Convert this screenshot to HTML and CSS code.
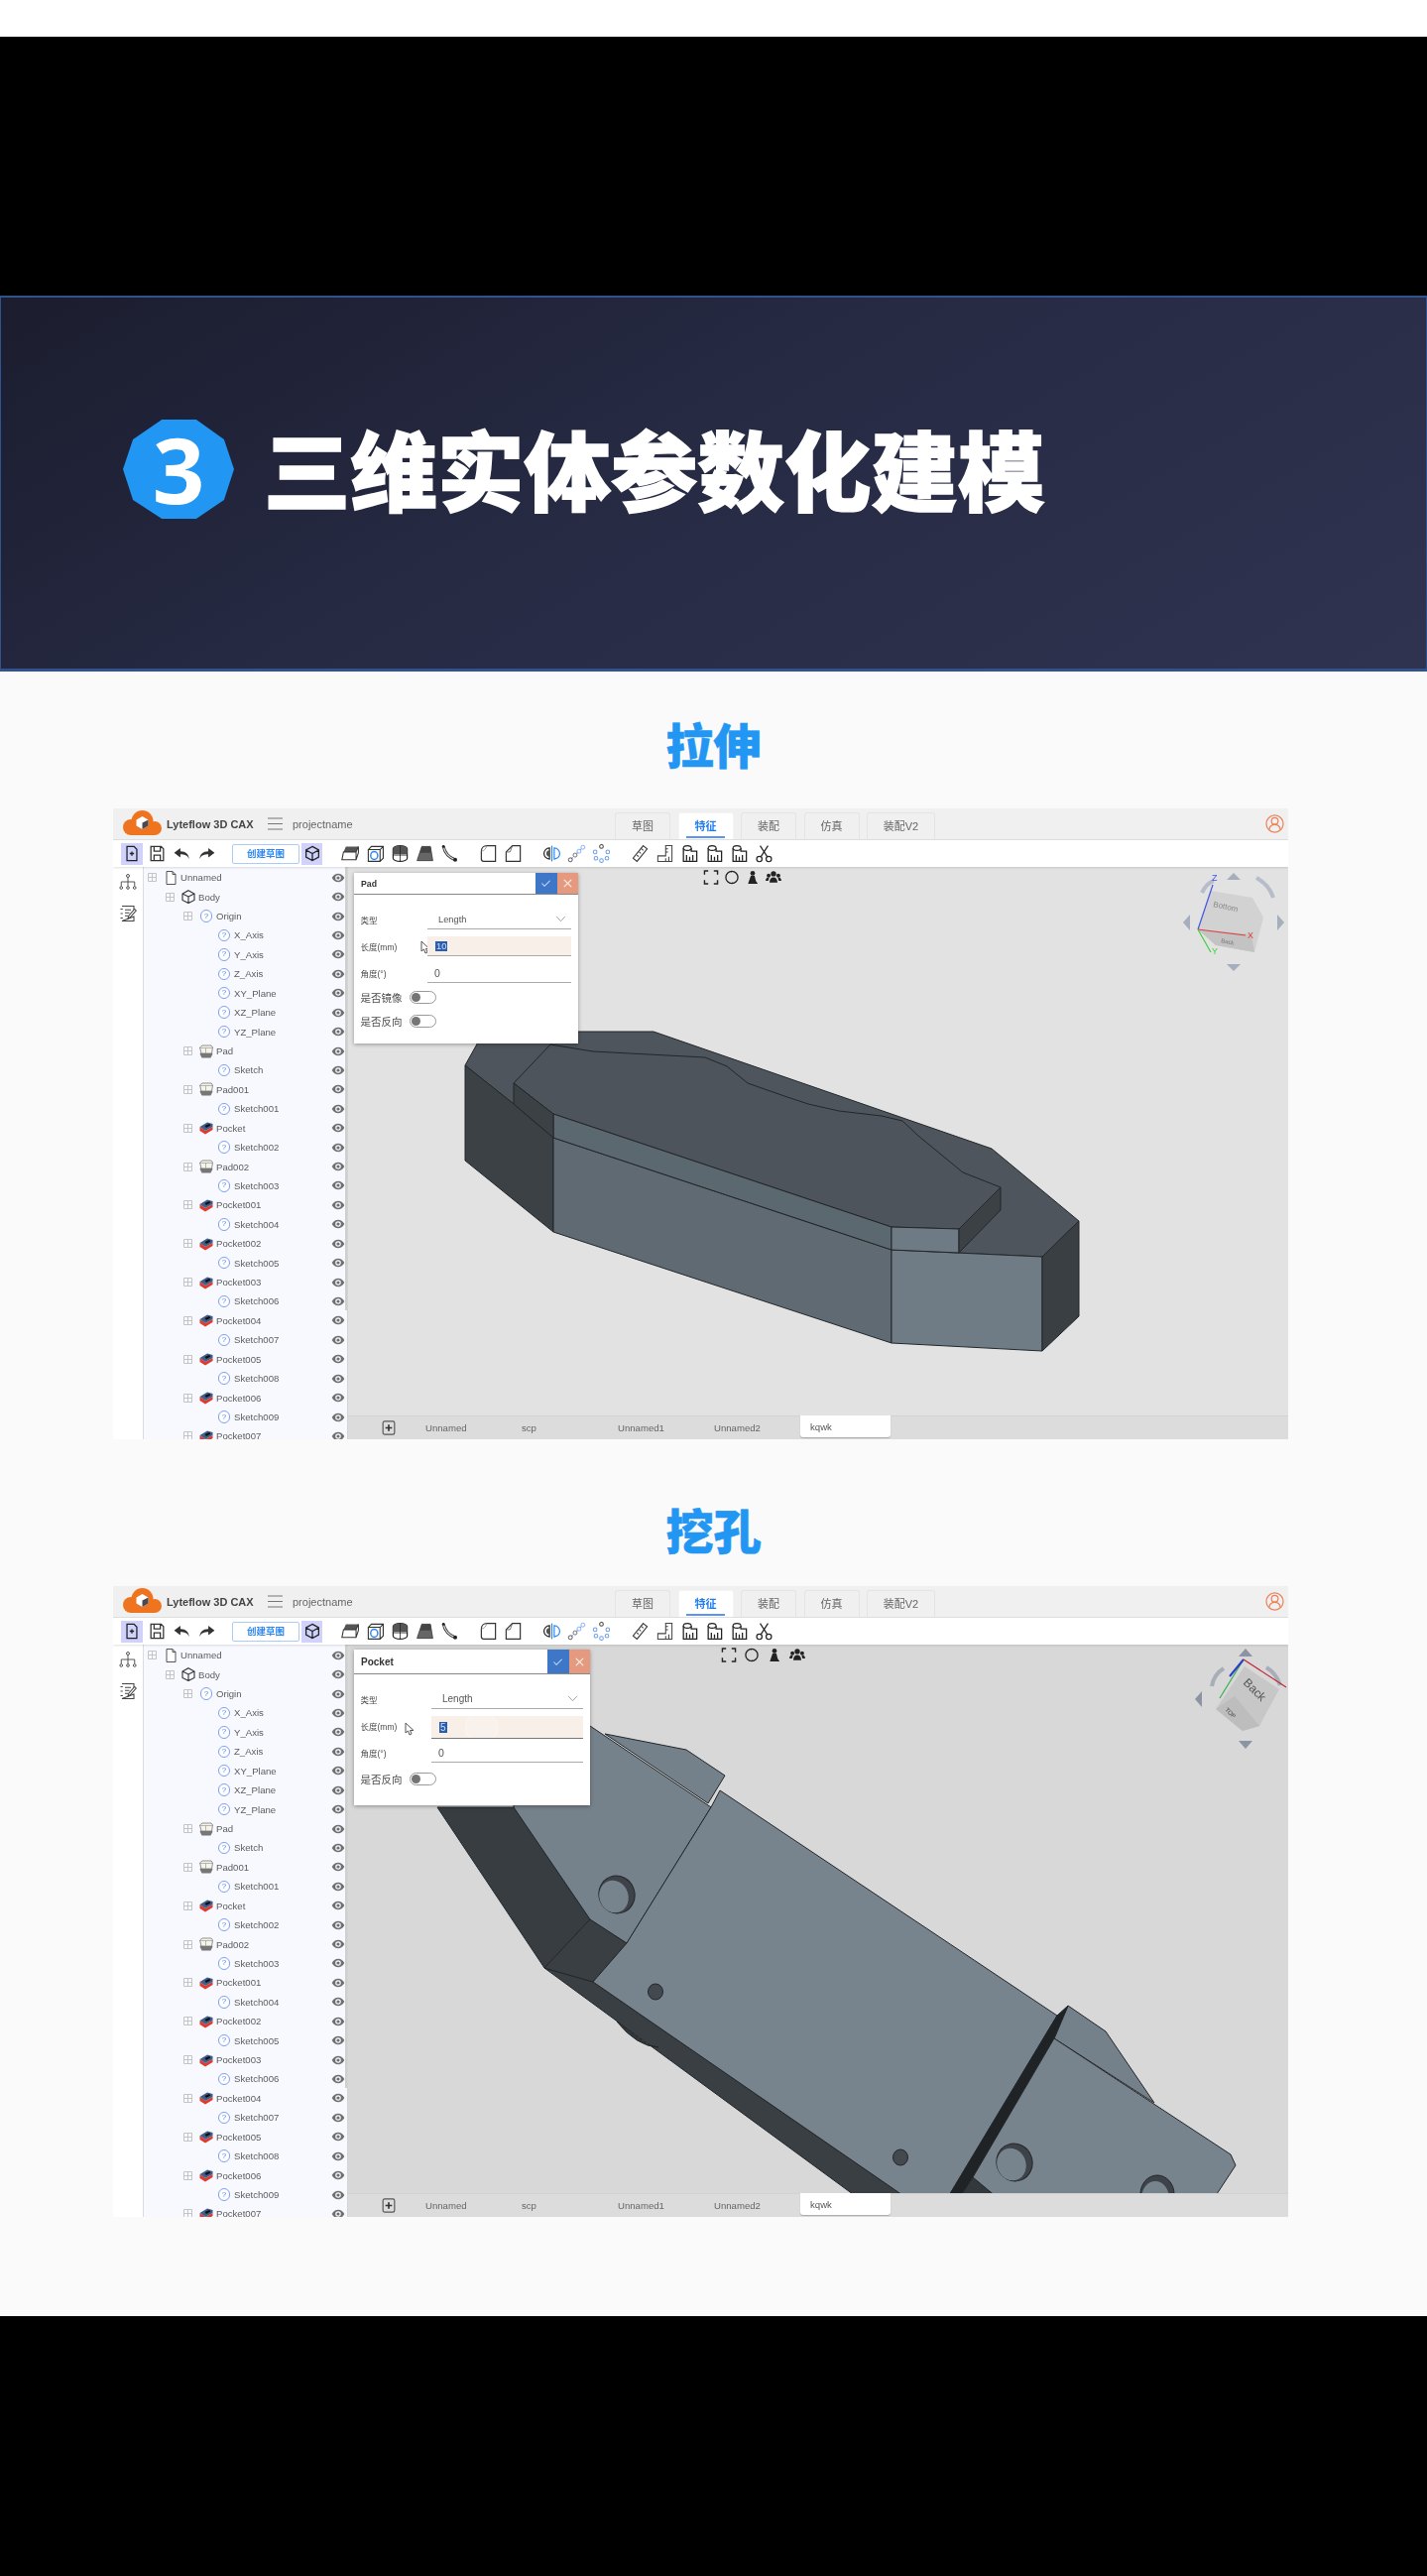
FILE: index.html
```html
<!DOCTYPE html>
<html lang="zh-CN">
<head>
<meta charset="utf-8">
<title>三维实体参数化建模</title>
<link rel="stylesheet" href="styles.css">
</head>
<body>
<svg class="defs" aria-hidden="true">
  <symbol id="logo" viewBox="0 0 40 25"><g fill="#ee7420"><circle cx="8" cy="17" r="8"/><circle cx="19.500" cy="11" r="11"/><circle cx="32" cy="18" r="7"/><rect x="8" y="14" width="24" height="11"/></g><path d="M19.500 6l6 3.500v6l-6 3.500-6-3.500v-6z" fill="#fff"/><path d="M19.500 12.500l6-3v6l-6 3.500z" fill="#454a55"/></symbol>
  <symbol id="menu" viewBox="0 0 15 13"><path d="M0 1h15M0 6.500h15M0 12h15" stroke="#777" stroke-width="1.200"/></symbol>
  <symbol id="user" viewBox="0 0 20 20"><circle cx="10" cy="10" r="9" fill="none" stroke="#ec835a" stroke-width="1.300"/><circle cx="10" cy="7" r="3.500" fill="none" stroke="#ec835a" stroke-width="1.300"/><path d="M4 16.500c.5-4 3-5.500 6-5.500s5.500 1.500 6 5.500" fill="none" stroke="#ec835a" stroke-width="1.300"/></symbol>
  <symbol id="new" viewBox="0 0 24 24"><path d="M5 2h10l4 4v16H5zM9 12h6M12 9v6" fill="none" stroke="#222" stroke-width="1.800"/></symbol>
  <symbol id="save" viewBox="0 0 24 24"><path d="M4 3h13l3 3v15H4zM8 3v6h8V3M8 21v-7h8v7" fill="none" stroke="#333" stroke-width="1.600"/></symbol>
  <symbol id="undo" viewBox="0 0 24 24"><path d="M10 5L2 11l8 6v-4c5 0 9 1 11 6 0-6-4-10-11-10z" fill="#333"/></symbol>
  <symbol id="redo" viewBox="0 0 24 24"><path d="M14 5l8 6-8 6v-4c-5 0-9 1-11 6 0-6 4-10 11-10z" fill="#333"/></symbol>
  <symbol id="cube" viewBox="0 0 24 24"><path d="M12 2l9 5v10l-9 5-9-5V7zM3 7l9 5 9-5M12 12v10" fill="none" stroke="#222" stroke-width="1.800"/></symbol>
  <symbol id="t1" viewBox="0 0 24 24"><path d="M6 3h16l-3 7H3z" fill="#555"/><path d="M3 10h16v10H1z M19 10l3-7v8l-3 9" fill="#fff" stroke="#333" stroke-width="1.300"/></symbol>
  <symbol id="t2" viewBox="0 0 24 24"><path d="M3 7h15v15H3zM3 7l4-4h15v15l-4 4M18 7l4-4" fill="#fff" stroke="#333" stroke-width="1.400"/><ellipse cx="10.500" cy="14.500" rx="4.500" ry="5" fill="none" stroke="#2e86f0" stroke-width="1.800"/></symbol>
  <symbol id="t3" viewBox="0 0 24 24"><path d="M3 6a9 4 0 0 1 18 0v12a9 4 0 0 1-18 0z" fill="#fff" stroke="#222" stroke-width="1.500"/><path d="M3 6a9 4 0 0 1 18 0v7H3z" fill="#555"/><path d="M12 2v20M3 14h18" stroke="#222"/></symbol>
  <symbol id="t4" viewBox="0 0 24 24"><path d="M8 3h11l3 18H2z" fill="#666" stroke="#333"/><path d="M8 3h11l1 8H6z" fill="#444"/></symbol>
  <symbol id="t5" viewBox="0 0 24 24"><path d="M4 3c2 9 7 14 15 17" fill="none" stroke="#333" stroke-width="3.500"/><path d="M4 3c2 9 7 14 15 17" fill="none" stroke="#ddd" stroke-width="1.500"/><circle cx="4" cy="3" r="1.800" fill="#222"/><circle cx="19" cy="20" r="2.500" fill="#222"/></symbol>
  <symbol id="t6" viewBox="0 0 24 24"><path d="M3 9c0-4 3-7 7-7h11v20H6a3 3 0 0 1-3-3z" fill="#fff" stroke="#333" stroke-width="1.500"/><path d="M3 9c3 0 6-3 7-7" fill="none" stroke="#888"/></symbol>
  <symbol id="t7" viewBox="0 0 24 24"><path d="M3 10l8-8h10v20H3z" fill="#fff" stroke="#333" stroke-width="1.500"/><path d="M3 10h5l3-8" fill="none" stroke="#555"/></symbol>
  <symbol id="t8" viewBox="0 0 24 24"><path d="M9 5a7 7 0 0 0 0 14z" fill="#fff" stroke="#222" stroke-width="1.500"/><path d="M9 8a4 4 0 0 0 0 8z" fill="#555"/><path d="M12 2v20" stroke="#2e86f0" stroke-width="1.500"/><path d="M15 5a7 7 0 0 1 0 14z" fill="none" stroke="#2e86f0" stroke-width="1.500"/></symbol>
  <symbol id="t9" viewBox="0 0 24 24"><path d="M5 19L19 5" stroke="#8fb4ee" stroke-width="2" stroke-dasharray="3 2"/><circle cx="4" cy="20" r="2.500" fill="#fff" stroke="#333"/><circle cx="10" cy="14" r="2.500" fill="#fff" stroke="#555"/><circle cx="15" cy="9" r="2.500" fill="#fff" stroke="#6d9fec"/><circle cx="20" cy="4" r="2.500" fill="#fff" stroke="#6d9fec"/></symbol>
  <symbol id="t10" viewBox="0 0 24 24"><g fill="#fff" stroke="#6d9fec" stroke-width="1.300"><circle cx="12" cy="21" r="2.300"/><circle cx="5" cy="18" r="2.300"/><circle cx="19" cy="18" r="2.300"/><circle cx="4" cy="10" r="2.300"/><circle cx="20" cy="10" r="2.300"/></g><g fill="#fff" stroke="#444" stroke-width="1.300"><circle cx="12" cy="3" r="2.300"/></g></symbol>
  <symbol id="t11" viewBox="0 0 24 24"><path d="M16 2l5 4L8 22l-5-4zM14 6l2 2M11 10l2 2M8 14l2 2" fill="#fff" stroke="#333" stroke-width="1.300"/></symbol>
  <symbol id="t12" viewBox="0 0 24 24"><path d="M13 2h8v20H3v-7h10zM17 16v6M13 18v4M13 6h3M13 10h3" fill="#fff" stroke="#444" stroke-width="1.300"/></symbol>
  <symbol id="t13" viewBox="0 0 24 24"><path d="M4 6h10v3h7v13H4z" fill="#fff" stroke="#222" stroke-width="1.600"/><ellipse cx="9" cy="5" rx="5" ry="3" fill="#fff" stroke="#222" stroke-width="1.400"/><path d="M8 21v-7M12 21v-5M16 21v-7" stroke="#222" stroke-width="1.600"/></symbol>
  <symbol id="t16" viewBox="0 0 24 24"><path d="M7 2l9 14M17 2L8 16" stroke="#222" stroke-width="1.500"/><circle cx="6" cy="19" r="3.400" fill="none" stroke="#222" stroke-width="1.500"/><circle cx="18" cy="19" r="3.400" fill="none" stroke="#222" stroke-width="1.500"/></symbol>
  <symbol id="org" viewBox="0 0 24 24"><path d="M12 6v6M3 18v-6h18v6M12 12v6" fill="none" stroke="#444" stroke-width="1.200"/><circle cx="12" cy="4" r="2" fill="none" stroke="#444" stroke-width="1.200"/><circle cx="3" cy="20" r="1.800" fill="none" stroke="#444" stroke-width="1.200"/><circle cx="12" cy="20" r="1.800" fill="none" stroke="#444" stroke-width="1.200"/><circle cx="21" cy="20" r="1.800" fill="none" stroke="#444" stroke-width="1.200"/></symbol>
  <symbol id="note" viewBox="0 0 24 24"><path d="M4 2h16v7M20 16v6H4zM8 7h8M8 11h6M8 15h4M2 6h3M2 12h3M2 18h3" fill="none" stroke="#444" stroke-width="1.400"/><path d="M12 19l1-4 8-9 2 2-8 9z" fill="#fff" stroke="#444" stroke-width="1.400"/></symbol>
  <symbol id="xp" viewBox="0 0 9 9"><path d="M.5.500h8v8h-8zM4.500.500v8M.5 4.500h8" fill="none" stroke="#c4c4c4"/></symbol>
  <symbol id="file" viewBox="0 0 14 14"><path d="M3 .5h6l3 3v10H3zM9 .5v3h3" fill="#fff" stroke="#555"/></symbol>
  <symbol id="body" viewBox="0 0 14 14"><path d="M7 .7l6 3.300v6.500l-6 3-6-3V4zM1 4l6 3 6-3M7 7v6.500" fill="none" stroke="#333" stroke-width="1.100"/></symbol>
  <symbol id="pad" viewBox="0 0 14 14"><path d="M.5 9.500l2-2h9l2 2-2 4h-9z" fill="#777"/><path d="M3 1h9l1.500 2-1 6H2L.5 3z" fill="#f6f4e8" stroke="#777" stroke-width=".8"/><path d="M.5 3.500h13M6.500 3.500V9" stroke="#999" stroke-width=".7"/></symbol>
  <symbol id="pocket" viewBox="0 0 14 14"><path d="M.5 6L6 10l7.500-4v3L6 13.500.5 10z" fill="#e03a2e"/><path d="M.5 6L8 1.500l5.500 1.500v3L6 10z" fill="#3f5f8a"/><path d="M5.500 5L10 3l1.500 1.500L7 7z" fill="#111"/></symbol>
  <symbol id="eye" viewBox="0 0 14 14"><path d="M.7 7C2.500 3.800 4.500 2.700 7 2.700S11.500 3.800 13.300 7c-1.800 3.200-3.800 4.300-6.300 4.300S2.500 10.200.7 7z" fill="#6f6f6f"/><circle cx="7" cy="7" r="2.800" fill="#f7f9ff"/><circle cx="7" cy="7" r="1.600" fill="#6f6f6f"/></symbol>
  <symbol id="v1" viewBox="0 0 16 16"><path d="M1 5V1h4M11 1h4v4M15 11v4h-4M5 15H1v-4" fill="none" stroke="#222" stroke-width="1.500"/></symbol>
  <symbol id="v2" viewBox="0 0 16 16"><circle cx="8" cy="8" r="6.500" fill="none" stroke="#222" stroke-width="1.400"/><path d="M6 1l3 0-1.500 2zM10 15l-3 0 1.500-2z" fill="#222"/></symbol>
  <symbol id="v3" viewBox="0 0 16 16"><circle cx="8" cy="3.500" r="2.500" fill="#222"/><path d="M6 6h4l1.500 6 2 3H3l1-3z" fill="#222"/></symbol>
  <symbol id="v4" viewBox="0 0 18 16"><circle cx="9" cy="4" r="3" fill="#222"/><circle cx="3.500" cy="6" r="2.200" fill="#222"/><circle cx="14.500" cy="6" r="2.200" fill="#222"/><path d="M4.500 14c0-4 2-6 4.500-6s4.500 2 4.500 6zM0 12c0-2 1.500-4 3-4l1 1-1 3zM18 12c0-2-1.500-4-3-4l-1 1 1 3z" fill="#222"/></symbol>
  <symbol id="cur" viewBox="0 0 10 14"><path d="M1 1v10l2.500-2L5 13l2-1-1.500-3.500H9z" fill="#fff" stroke="#555"/></symbol>
  <symbol id="chk" viewBox="0 0 12 12"><path d="M1.500 6l3 3 6-6" fill="none" stroke="#cfe0f7" stroke-width="1.100"/></symbol>
  <symbol id="cls" viewBox="0 0 12 12"><path d="M2 2l8 8M10 2l-8 8" fill="none" stroke="#fbeee8" stroke-width="1.300"/></symbol>
  <symbol id="chev" viewBox="0 0 12 8"><path d="M1 1l5 5.500L11 1" fill="none" stroke="#999"/></symbol>
  <symbol id="plus" viewBox="0 0 16 18"><rect x="1" y="1" width="14" height="16" rx="2" fill="none" stroke="#555" stroke-width="1.400"/><path d="M8 5v8M4 9h8" stroke="#333" stroke-width="2"/></symbol>
</svg>

<div class="topstrip"></div>
<div class="blackband"></div>
<section class="banner">
  <div class="badge">3</div>
  <h1 class="title">三维实体参数化建模</h1>
</section>

<main class="content">
  <h2 class="heading first">拉伸</h2>
  <div class="app">
    <header class="app-head">
      <svg class="logo"><use href="#logo"/></svg>
      <span class="brand">Lyteflow 3D CAX</span>
      <svg class="menu"><use href="#menu"/></svg>
      <span class="project">projectname</span>
      <nav class="tabs">
        <span class="tab w56">草图</span><span class="tab w56 active">特征</span><span class="tab w56">装配</span><span class="tab w56">仿真</span><span class="tab w69">装配V2</span>
      </nav>
      <svg class="user"><use href="#user"/></svg>
    </header>
    <div class="toolbar">
      <span class="on"><svg class="ti"><use href="#new"/></svg></span>
      <svg class="ti gap0"><use href="#save"/></svg><svg class="ti"><use href="#undo"/></svg><svg class="ti"><use href="#redo"/></svg>
      <button class="sketch-btn">创建草图</button>
      <span class="on cube-on"><svg class="ti"><use href="#cube"/></svg></span>
      <svg class="ti gap1"><use href="#t1"/></svg><svg class="ti"><use href="#t2"/></svg><svg class="ti"><use href="#t3"/></svg><svg class="ti"><use href="#t4"/></svg><svg class="ti"><use href="#t5"/></svg>
      <svg class="ti gap2"><use href="#t6"/></svg><svg class="ti"><use href="#t7"/></svg>
      <svg class="ti gap2"><use href="#t8"/></svg><svg class="ti"><use href="#t9"/></svg><svg class="ti"><use href="#t10"/></svg>
      <svg class="ti gap2"><use href="#t11"/></svg><svg class="ti"><use href="#t12"/></svg><svg class="ti"><use href="#t13"/></svg><svg class="ti"><use href="#t13"/></svg><svg class="ti"><use href="#t13"/></svg><svg class="ti"><use href="#t16"/></svg>
    </div>
    <div class="app-body">
      <aside class="rail"><svg class="rail-ic"><use href="#org"/></svg><svg class="rail-ic"><use href="#note"/></svg></aside>
      <div class="tree">
        <div class="row l0"><svg class="xp"><use href="#xp"/></svg><svg class="ic"><use href="#file"/></svg><span>Unnamed</span><svg class="eye"><use href="#eye"/></svg></div>
        <div class="row l1"><svg class="xp"><use href="#xp"/></svg><svg class="ic"><use href="#body"/></svg><span>Body</span><svg class="eye"><use href="#eye"/></svg></div>
        <div class="row l2"><svg class="xp"><use href="#xp"/></svg><b class="q">?</b><span>Origin</span><svg class="eye"><use href="#eye"/></svg></div>
        <div class="row l3"><svg class="xp"></svg><b class="q">?</b><span>X_Axis</span><svg class="eye"><use href="#eye"/></svg></div>
        <div class="row l3"><svg class="xp"></svg><b class="q">?</b><span>Y_Axis</span><svg class="eye"><use href="#eye"/></svg></div>
        <div class="row l3"><svg class="xp"></svg><b class="q">?</b><span>Z_Axis</span><svg class="eye"><use href="#eye"/></svg></div>
        <div class="row l3"><svg class="xp"></svg><b class="q">?</b><span>XY_Plane</span><svg class="eye"><use href="#eye"/></svg></div>
        <div class="row l3"><svg class="xp"></svg><b class="q">?</b><span>XZ_Plane</span><svg class="eye"><use href="#eye"/></svg></div>
        <div class="row l3"><svg class="xp"></svg><b class="q">?</b><span>YZ_Plane</span><svg class="eye"><use href="#eye"/></svg></div>
        <div class="row l2"><svg class="xp"><use href="#xp"/></svg><svg class="ic"><use href="#pad"/></svg><span>Pad</span><svg class="eye"><use href="#eye"/></svg></div>
        <div class="row l3"><svg class="xp"></svg><b class="q">?</b><span>Sketch</span><svg class="eye"><use href="#eye"/></svg></div>
        <div class="row l2"><svg class="xp"><use href="#xp"/></svg><svg class="ic"><use href="#pad"/></svg><span>Pad001</span><svg class="eye"><use href="#eye"/></svg></div>
        <div class="row l3"><svg class="xp"></svg><b class="q">?</b><span>Sketch001</span><svg class="eye"><use href="#eye"/></svg></div>
        <div class="row l2"><svg class="xp"><use href="#xp"/></svg><svg class="ic"><use href="#pocket"/></svg><span>Pocket</span><svg class="eye"><use href="#eye"/></svg></div>
        <div class="row l3"><svg class="xp"></svg><b class="q">?</b><span>Sketch002</span><svg class="eye"><use href="#eye"/></svg></div>
        <div class="row l2"><svg class="xp"><use href="#xp"/></svg><svg class="ic"><use href="#pad"/></svg><span>Pad002</span><svg class="eye"><use href="#eye"/></svg></div>
        <div class="row l3"><svg class="xp"></svg><b class="q">?</b><span>Sketch003</span><svg class="eye"><use href="#eye"/></svg></div>
        <div class="row l2"><svg class="xp"><use href="#xp"/></svg><svg class="ic"><use href="#pocket"/></svg><span>Pocket001</span><svg class="eye"><use href="#eye"/></svg></div>
        <div class="row l3"><svg class="xp"></svg><b class="q">?</b><span>Sketch004</span><svg class="eye"><use href="#eye"/></svg></div>
        <div class="row l2"><svg class="xp"><use href="#xp"/></svg><svg class="ic"><use href="#pocket"/></svg><span>Pocket002</span><svg class="eye"><use href="#eye"/></svg></div>
        <div class="row l3"><svg class="xp"></svg><b class="q">?</b><span>Sketch005</span><svg class="eye"><use href="#eye"/></svg></div>
        <div class="row l2"><svg class="xp"><use href="#xp"/></svg><svg class="ic"><use href="#pocket"/></svg><span>Pocket003</span><svg class="eye"><use href="#eye"/></svg></div>
        <div class="row l3"><svg class="xp"></svg><b class="q">?</b><span>Sketch006</span><svg class="eye"><use href="#eye"/></svg></div>
        <div class="row l2"><svg class="xp"><use href="#xp"/></svg><svg class="ic"><use href="#pocket"/></svg><span>Pocket004</span><svg class="eye"><use href="#eye"/></svg></div>
        <div class="row l3"><svg class="xp"></svg><b class="q">?</b><span>Sketch007</span><svg class="eye"><use href="#eye"/></svg></div>
        <div class="row l2"><svg class="xp"><use href="#xp"/></svg><svg class="ic"><use href="#pocket"/></svg><span>Pocket005</span><svg class="eye"><use href="#eye"/></svg></div>
        <div class="row l3"><svg class="xp"></svg><b class="q">?</b><span>Sketch008</span><svg class="eye"><use href="#eye"/></svg></div>
        <div class="row l2"><svg class="xp"><use href="#xp"/></svg><svg class="ic"><use href="#pocket"/></svg><span>Pocket006</span><svg class="eye"><use href="#eye"/></svg></div>
        <div class="row l3"><svg class="xp"></svg><b class="q">?</b><span>Sketch009</span><svg class="eye"><use href="#eye"/></svg></div>
        <div class="row l2"><svg class="xp"><use href="#xp"/></svg><svg class="ic"><use href="#pocket"/></svg><span>Pocket007</span><svg class="eye"><use href="#eye"/></svg></div>
      </div>
      <div class="view">
        <div class="canvas canvas-a">
          <svg class="model" viewBox="350 874 949 553">
            <g stroke="#23272a" stroke-width="1" stroke-linejoin="round">
              <path d="M469 1074L488 1040H659L1000 1158L1088 1231L1051 1267L899 1260L558 1147L518 1113z" fill="#4e555c"/>
              <path d="M469 1074L518 1113L558 1147V1242L469 1170z" fill="#3c4146"/>
              <path d="M558 1147L899 1260V1354L558 1242z" fill="#5f6a72"/>
              <path d="M899 1260L1051 1267V1362L899 1354z" fill="#6f7c86"/>
              <path d="M1051 1267L1088 1231V1327L1051 1362z" fill="#3a3f44"/>
              <path d="M518 1092L555 1053L598 1060L711 1066L733 1075L754 1092L791 1105L815 1113L846 1120L889 1125L910 1130L926 1145L971 1182L1009 1197L967 1239L899 1237L558 1123z" fill="#4d545b"/>
              <path d="M558 1123L899 1237V1260L558 1147z" fill="#5c6870"/>
              <path d="M899 1237L967 1239V1263L899 1260z" fill="#6e7b85"/>
              <path d="M967 1239L1009 1197V1220L967 1263z" fill="#3c4146"/>
              <path d="M518 1092L558 1123V1147L518 1113z" fill="#3c4146"/>
            </g>
            <g class="gizmo">
              <path d="M1221 898L1263 905L1274 925L1265 960L1226 953L1208 937z" fill="#d2d2d2"/>
              <path d="M1208 937L1262 942L1265 960L1226 953z" fill="#c3c3c3"/>
              <path d="M1244 880l7 7h-14zM1244 979l7-7h-14zM1193 930l7-8v16zM1295 930l-7-8v16z" fill="#a5aebc"/>
              <path d="M1212 900q5-10 12-12M1267 885q13 7 17 20" fill="none" stroke="#b6bdc8" stroke-width="4"/>
              <text class="gz-text" transform="translate(1223 914) rotate(12)">Bottom</text>
              <text class="gz-small" transform="translate(1231 950) rotate(12)">Back</text>
              <path d="M1208 937L1223 892" stroke="#3f55e6" stroke-width="1.200"/>
              <path d="M1208 937L1256 943" stroke="#e23b3b" stroke-width="1.200"/>
              <path d="M1208 937L1221 960" stroke="#40d040" stroke-width="1.200"/>
              <text class="gz-z" x="1222" y="888">Z</text><text class="gz-x" x="1258" y="946">X</text><text class="gz-y" x="1222" y="962">Y</text>
            </g>
          </svg>
          <div class="tools tools-a"><svg class="tool"><use href="#v1"/></svg><svg class="tool"><use href="#v2"/></svg><svg class="tool"><use href="#v3"/></svg><svg class="tool"><use href="#v4"/></svg></div>
          <div class="dlg dlg-a">
            <div class="dlg-head"><b>Pad</b><span class="ok"><svg><use href="#chk"/></svg></span><span class="no"><svg><use href="#cls"/></svg></span></div>
            <div class="f first-f"><label>类型</label><div class="val line">Length<svg class="chev"><use href="#chev"/></svg></div></div>
            <div class="f"><label class="lat">长度(mm)</label><svg class="cur"><use href="#cur"/></svg><div class="val line hot"><i>10</i></div></div>
            <div class="f"><label class="lat">角度(°)</label><div class="val line num">0</div></div>
            <div class="sw"><label>是否镜像</label><span class="toggle"></span></div>
            <div class="sw"><label>是否反向</label><span class="toggle"></span></div>
          </div>
        </div>
        <div class="doc-bar">
          <svg class="doc-add"><use href="#plus"/></svg>
          <span class="doc">Unnamed</span><span class="doc">scp</span><span class="doc">Unnamed1</span><span class="doc">Unnamed2</span><span class="doc active">kqwk</span>
        </div>
      </div>
    </div>
  </div>

  <h2 class="heading second">挖孔</h2>
  <div class="app">
    <header class="app-head">
      <svg class="logo"><use href="#logo"/></svg>
      <span class="brand">Lyteflow 3D CAX</span>
      <svg class="menu"><use href="#menu"/></svg>
      <span class="project">projectname</span>
      <nav class="tabs">
        <span class="tab w56">草图</span><span class="tab w56 active">特征</span><span class="tab w56">装配</span><span class="tab w56">仿真</span><span class="tab w69">装配V2</span>
      </nav>
      <svg class="user"><use href="#user"/></svg>
    </header>
    <div class="toolbar">
      <span class="on"><svg class="ti"><use href="#new"/></svg></span>
      <svg class="ti gap0"><use href="#save"/></svg><svg class="ti"><use href="#undo"/></svg><svg class="ti"><use href="#redo"/></svg>
      <button class="sketch-btn">创建草图</button>
      <span class="on cube-on"><svg class="ti"><use href="#cube"/></svg></span>
      <svg class="ti gap1"><use href="#t1"/></svg><svg class="ti"><use href="#t2"/></svg><svg class="ti"><use href="#t3"/></svg><svg class="ti"><use href="#t4"/></svg><svg class="ti"><use href="#t5"/></svg>
      <svg class="ti gap2"><use href="#t6"/></svg><svg class="ti"><use href="#t7"/></svg>
      <svg class="ti gap2"><use href="#t8"/></svg><svg class="ti"><use href="#t9"/></svg><svg class="ti"><use href="#t10"/></svg>
      <svg class="ti gap2"><use href="#t11"/></svg><svg class="ti"><use href="#t12"/></svg><svg class="ti"><use href="#t13"/></svg><svg class="ti"><use href="#t13"/></svg><svg class="ti"><use href="#t13"/></svg><svg class="ti"><use href="#t16"/></svg>
    </div>
    <div class="app-body">
      <aside class="rail"><svg class="rail-ic"><use href="#org"/></svg><svg class="rail-ic"><use href="#note"/></svg></aside>
      <div class="tree">
        <div class="row l0"><svg class="xp"><use href="#xp"/></svg><svg class="ic"><use href="#file"/></svg><span>Unnamed</span><svg class="eye"><use href="#eye"/></svg></div>
        <div class="row l1"><svg class="xp"><use href="#xp"/></svg><svg class="ic"><use href="#body"/></svg><span>Body</span><svg class="eye"><use href="#eye"/></svg></div>
        <div class="row l2"><svg class="xp"><use href="#xp"/></svg><b class="q">?</b><span>Origin</span><svg class="eye"><use href="#eye"/></svg></div>
        <div class="row l3"><svg class="xp"></svg><b class="q">?</b><span>X_Axis</span><svg class="eye"><use href="#eye"/></svg></div>
        <div class="row l3"><svg class="xp"></svg><b class="q">?</b><span>Y_Axis</span><svg class="eye"><use href="#eye"/></svg></div>
        <div class="row l3"><svg class="xp"></svg><b class="q">?</b><span>Z_Axis</span><svg class="eye"><use href="#eye"/></svg></div>
        <div class="row l3"><svg class="xp"></svg><b class="q">?</b><span>XY_Plane</span><svg class="eye"><use href="#eye"/></svg></div>
        <div class="row l3"><svg class="xp"></svg><b class="q">?</b><span>XZ_Plane</span><svg class="eye"><use href="#eye"/></svg></div>
        <div class="row l3"><svg class="xp"></svg><b class="q">?</b><span>YZ_Plane</span><svg class="eye"><use href="#eye"/></svg></div>
        <div class="row l2"><svg class="xp"><use href="#xp"/></svg><svg class="ic"><use href="#pad"/></svg><span>Pad</span><svg class="eye"><use href="#eye"/></svg></div>
        <div class="row l3"><svg class="xp"></svg><b class="q">?</b><span>Sketch</span><svg class="eye"><use href="#eye"/></svg></div>
        <div class="row l2"><svg class="xp"><use href="#xp"/></svg><svg class="ic"><use href="#pad"/></svg><span>Pad001</span><svg class="eye"><use href="#eye"/></svg></div>
        <div class="row l3"><svg class="xp"></svg><b class="q">?</b><span>Sketch001</span><svg class="eye"><use href="#eye"/></svg></div>
        <div class="row l2"><svg class="xp"><use href="#xp"/></svg><svg class="ic"><use href="#pocket"/></svg><span>Pocket</span><svg class="eye"><use href="#eye"/></svg></div>
        <div class="row l3"><svg class="xp"></svg><b class="q">?</b><span>Sketch002</span><svg class="eye"><use href="#eye"/></svg></div>
        <div class="row l2"><svg class="xp"><use href="#xp"/></svg><svg class="ic"><use href="#pad"/></svg><span>Pad002</span><svg class="eye"><use href="#eye"/></svg></div>
        <div class="row l3"><svg class="xp"></svg><b class="q">?</b><span>Sketch003</span><svg class="eye"><use href="#eye"/></svg></div>
        <div class="row l2"><svg class="xp"><use href="#xp"/></svg><svg class="ic"><use href="#pocket"/></svg><span>Pocket001</span><svg class="eye"><use href="#eye"/></svg></div>
        <div class="row l3"><svg class="xp"></svg><b class="q">?</b><span>Sketch004</span><svg class="eye"><use href="#eye"/></svg></div>
        <div class="row l2"><svg class="xp"><use href="#xp"/></svg><svg class="ic"><use href="#pocket"/></svg><span>Pocket002</span><svg class="eye"><use href="#eye"/></svg></div>
        <div class="row l3"><svg class="xp"></svg><b class="q">?</b><span>Sketch005</span><svg class="eye"><use href="#eye"/></svg></div>
        <div class="row l2"><svg class="xp"><use href="#xp"/></svg><svg class="ic"><use href="#pocket"/></svg><span>Pocket003</span><svg class="eye"><use href="#eye"/></svg></div>
        <div class="row l3"><svg class="xp"></svg><b class="q">?</b><span>Sketch006</span><svg class="eye"><use href="#eye"/></svg></div>
        <div class="row l2"><svg class="xp"><use href="#xp"/></svg><svg class="ic"><use href="#pocket"/></svg><span>Pocket004</span><svg class="eye"><use href="#eye"/></svg></div>
        <div class="row l3"><svg class="xp"></svg><b class="q">?</b><span>Sketch007</span><svg class="eye"><use href="#eye"/></svg></div>
        <div class="row l2"><svg class="xp"><use href="#xp"/></svg><svg class="ic"><use href="#pocket"/></svg><span>Pocket005</span><svg class="eye"><use href="#eye"/></svg></div>
        <div class="row l3"><svg class="xp"></svg><b class="q">?</b><span>Sketch008</span><svg class="eye"><use href="#eye"/></svg></div>
        <div class="row l2"><svg class="xp"><use href="#xp"/></svg><svg class="ic"><use href="#pocket"/></svg><span>Pocket006</span><svg class="eye"><use href="#eye"/></svg></div>
        <div class="row l3"><svg class="xp"></svg><b class="q">?</b><span>Sketch009</span><svg class="eye"><use href="#eye"/></svg></div>
        <div class="row l2"><svg class="xp"><use href="#xp"/></svg><svg class="ic"><use href="#pocket"/></svg><span>Pocket007</span><svg class="eye"><use href="#eye"/></svg></div>
      </div>
      <div class="view">
        <div class="canvas canvas-b">
          <svg class="model" viewBox="350 1658 949 553">
            <g stroke="#23272a" stroke-width="1" stroke-linejoin="round">
              <path d="M441 1822L518 1822L595 1935L549 1984z" fill="#383d42"/>
              <path d="M549 1984L598 1998L913 2215H864z" fill="#3a3f44"/>
              <path d="M622 2038q20 25 42 26l-10 -2z" fill="#33383c"/>
              <path d="M595 1935L632 1959L598 1998L549 1984z" fill="#3a3f44"/>
              <path d="M610 1748L692 1764L731 1790L714 1818z" fill="#74808a"/>
              <path d="M520 1700L595 1740L717 1822L632 1959L595 1935L518 1822z" fill="#76828b"/>
              <path d="M726 1805L1066 2032L956 2215H913L598 1998L632 1959L717 1822z" fill="#78848d"/>
              <path d="M1077 2022L1115 2048L1164 2120L1063 2055z" fill="#74808a"/>
              <path d="M1066 2032L1077 2022L1063 2055L981 2195L968 2215H956z" fill="#1f2326"/>
              <path d="M981 2195L1005 2215H968z" fill="#33383c"/>
              <path d="M1063 2055L1241 2172L1246 2183L1225 2215H1005L981 2195z" fill="#78848d"/>
              <ellipse cx="622" cy="1910" rx="18" ry="19" fill="#3d4349" transform="rotate(-20 622 1910)"/>
              <ellipse cx="1023" cy="2180" rx="18" ry="19" fill="#3d4349" transform="rotate(-20 1023 2180)"/>
              <ellipse cx="1167" cy="2212" rx="17" ry="19" fill="#3d4349"/>
              <ellipse cx="661" cy="2008" rx="7.500" ry="8" fill="#43494f"/>
              <ellipse cx="908" cy="2175" rx="7.500" ry="8" fill="#43494f"/>
            </g>
            <ellipse cx="619" cy="1912" rx="14.500" ry="16.500" fill="#78848d" transform="rotate(-20 619 1912)"/>
            <ellipse cx="1020" cy="2182" rx="14.500" ry="16.500" fill="#78848d" transform="rotate(-20 1020 2182)"/>
            <ellipse cx="1165" cy="2216" rx="14" ry="17" fill="#78848d"/>
            <g class="gizmo">
              <path d="M1255 1680L1290 1703L1270 1740L1253 1745L1226 1723z" fill="#c7c7c7"/>
              <path d="M1226 1723L1245 1710L1270 1740L1253 1745z" fill="#bdbdbd"/>
              <path d="M1256 1662l7 8h-14zM1256 1763l7-8h-14zM1205 1713l7-8v16z" fill="#8c93a3"/>
              <path d="M1222 1700q2-12 12-18M1277 1681q10 6 14 18" fill="none" stroke="#a8aeb8" stroke-width="4"/>
              <text class="gz-text dark" transform="translate(1253 1697) rotate(45)">Back</text>
              <text class="gz-small dark" transform="translate(1235 1724) rotate(45)">TOP</text>
              <path d="M1254 1673L1297 1701" stroke="#c2272d" stroke-width="1.200"/>
              <path d="M1254 1673L1230 1712" stroke="#33b04a" stroke-width="1.200"/>
              <path d="M1254 1673L1240 1690" stroke="#2c3ec4" stroke-width="2"/>
            </g>
          </svg>
          <div class="tools tools-b"><svg class="tool"><use href="#v1"/></svg><svg class="tool"><use href="#v2"/></svg><svg class="tool"><use href="#v3"/></svg><svg class="tool"><use href="#v4"/></svg></div>
          <div class="dlg dlg-b">
            <div class="dlg-head"><b>Pocket</b><span class="ok"><svg><use href="#chk"/></svg></span><span class="no"><svg><use href="#cls"/></svg></span></div>
            <div class="f first-f"><label>类型</label><div class="val line">Length<svg class="chev"><use href="#chev"/></svg></div></div>
            <div class="f"><label class="lat">长度(mm)</label><svg class="cur"><use href="#cur"/></svg><div class="val line hot"><i>5</i><span class="ring"></span></div></div>
            <div class="f"><label class="lat">角度(°)</label><div class="val line num">0</div></div>
            <div class="sw"><label>是否反向</label><span class="toggle"></span></div>
          </div>
        </div>
        <div class="doc-bar">
          <svg class="doc-add"><use href="#plus"/></svg>
          <span class="doc">Unnamed</span><span class="doc">scp</span><span class="doc">Unnamed1</span><span class="doc">Unnamed2</span><span class="doc active">kqwk</span>
        </div>
      </div>
    </div>
  </div>
</main>
<div class="blackfoot"></div>
</body>
</html>
```

FILE: styles.css
```css
* { box-sizing: border-box; }
html, body { margin: 0; padding: 0; }
body { width: 1439px; height: 2597px; overflow: hidden; background: #fafafa; font-family: "Liberation Sans", "Noto Sans CJK SC", sans-serif; }
.defs { position: absolute; width: 0; height: 0; overflow: hidden; }
svg { display: block; }

.topstrip { height: 37px; background: #fff; }
.blackband { height: 261px; background: #000; }
.blackfoot { height: 262px; background: #000; }

.banner { height: 379px; display: flex; align-items: center; gap: 30px; padding: 0 0 28px 123px; background: linear-gradient(150deg, #1b1d2e 0%, #262a43 45%, #2f3350 100%); border: solid #32518f; border-width: 2px 1px 3px 1px; }
.badge { width: 112px; height: 100px; display: flex; align-items: center; justify-content: center; background: #2196f3; color: #fff; font: 700 92px/1 "Noto Sans", sans-serif; clip-path: polygon(35% 0, 66% 0, 91% 20%, 100% 50%, 91% 81%, 66% 100%, 35% 100%, 9% 81%, 0 50%, 9% 20%); }
.title { margin: -5px 0 0; color: #fff; font: 900 87.500px/100px "Noto Sans CJK SC", sans-serif; -webkit-text-stroke: 1.500px #fff; white-space: nowrap; }

.content { height: 1658px; overflow: hidden; }
.heading { margin: 0; height: 60px; text-align: center; color: #2196f3; font: 900 48px/60px "Noto Sans CJK SC", sans-serif; -webkit-text-stroke: .6px #2196f3; }
.heading.first { margin-top: 42px; margin-bottom: 36px; }
.heading.second { margin-top: 60px; margin-bottom: 28px; }

.app { width: 1185px; height: 636px; margin-left: 114px; display: flex; flex-direction: column; overflow: hidden; filter: blur(.5px); color: #555; }

.app-head { height: 32px; flex: none; display: flex; align-items: flex-end; background: #f0f0f0; border-bottom: 1px solid #e0e0e0; position: relative; }
.logo { width: 40px; height: 25px; margin: 0 0 4px 10px; }
.brand { width: 102px; margin: 0 0 8px 4px; font-size: 11px; font-weight: 700; line-height: 14px; color: #444; white-space: nowrap; }
.menu { width: 15px; height: 13px; margin: 0 0 9px 0; }
.project { width: 325px; margin: 0 0 8px 10px; font-size: 11px; line-height: 14px; color: #666; }
.tabs { display: flex; gap: 7.500px; align-items: flex-end; }
.tab { height: 27px; padding-bottom: 2px; display: flex; align-items: center; justify-content: center; font-size: 11px; color: #666; border: 1px solid #e4e4e4; border-bottom: 0; border-radius: 3px 3px 0 0; background: #f0f0f0; }
.w56 { width: 56px; }
.w69 { width: 69px; }
.tab.active { background: #fff; color: #1f7bf2; font-weight: 700; border-color: #f4f4f4; position: relative; }
.tab.active::after { content: ""; position: absolute; left: 7px; right: 8px; bottom: 1px; height: 2px; background: #5c93f5; }
.user { width: 19px; height: 19px; margin: 0 4px 6px auto; }

.toolbar { height: 27px; flex: none; display: flex; align-items: center; padding-left: 6.5px; background: #fff; box-shadow: 0 1px 2px rgba(0,0,0,.12); position: relative; z-index: 2; }
.ti { width: 25px; height: 19px; flex: none; }
.on { width: 22px; height: 22px; margin: 0 1.500px; display: flex; align-items: center; justify-content: center; background: #d0d2fb; }
.on .ti { width: 18px; height: 17px; }
.cube-on { margin: 0 0 0 2px; width: 21px; }
.gap1 { margin-left: 15.500px; }
.gap2 { margin-left: 14px; }
.sketch-btn { width: 68px; height: 20px; margin: 0 0 0 13.500px; padding: 0; flex: none; border: 1px solid #a8ccf7; border-radius: 2px; background: #fff; color: #2e86f0; font: 700 9.500px/1 "Noto Sans CJK SC", sans-serif; }

.app-body { flex: 1; min-height: 0; display: flex; }
.rail { width: 30px; flex: none; display: flex; flex-direction: column; align-items: center; gap: 14px; padding-top: 6px; background: #fff; }
.rail-ic { width: 18px; height: 18px; }
.tree { width: 206px; flex: none; overflow: hidden; position: relative; padding-top: 1px; background: #f7f9ff; border-left: 1px solid #dcdcdc; }
.tree::after { content: ""; position: absolute; top: 0; right: 0; width: 2px; height: 447px; background: #cfcfcf; }
.row { height: 19.430px; display: flex; align-items: center; padding-right: 2px; font-size: 9.600px; color: #5c5c5c; white-space: nowrap; }
.row span { margin-left: 3px; }
.l0 { padding-left: 4px; }
.l1 { padding-left: 22px; }
.l2 { padding-left: 40px; }
.l3 { padding-left: 58px; }
.xp { width: 9px; height: 9px; flex: none; }
.ic { width: 14px; height: 14px; margin-left: 7px; flex: none; }
.q { width: 12.500px; height: 12.500px; margin: 0 .75px 0 7.750px; flex: none; display: flex; align-items: center; justify-content: center; border: 1px solid #7f9ff5; border-radius: 50%; background: #fff; color: #5d80e8; font-size: 8px; font-weight: 400; line-height: 1; }
.eye { width: 14px; height: 14px; margin-left: auto; flex: none; }

.view { flex: 1; min-width: 0; display: flex; flex-direction: column; border-left: 1px solid #d4d4d4; }
.canvas { flex: 1; min-height: 0; position: relative; overflow: hidden; }
.canvas-a { background: #e2e2e2; }
.canvas-b { background: #d8d8d8; }
.model { width: 949px; height: 553px; margin-left: -1px; }
.gz-text { font: 8px "Liberation Sans", sans-serif; fill: #888; }
.gz-small { font: 6px "Liberation Sans", sans-serif; fill: #777; }
.gz-text.dark { font-size: 12px; fill: #555; }
.gz-small.dark { font-size: 6px; fill: #444; }
.gz-z { font: 9px "Liberation Sans", sans-serif; fill: #3f55e6; }
.gz-x { font: 9px "Liberation Sans", sans-serif; fill: #e23b3b; }
.gz-y { font: 9px "Liberation Sans", sans-serif; fill: #40d040; }

.tools { position: absolute; top: 2px; display: flex; align-items: center; height: 16px; }
.tools-a { left: 358px; gap: 5px; }
.tools-b { left: 376px; gap: 7px; }
.tool { width: 16px; height: 15px; }

.dlg { position: absolute; left: 6px; background: #fff; box-shadow: 0 1px 4px rgba(0,0,0,.35); color: #555; }
.dlg-a { top: 6px; width: 226px; height: 172px; }
.dlg-b { top: 5px; width: 238px; height: 157px; }
.dlg-head { display: flex; align-items: stretch; border-bottom: 1px solid #888; color: #333; }
.dlg-a .dlg-head { height: 22px; font-size: 8.700px; }
.dlg-b .dlg-head { height: 25px; font-size: 10px; }
.dlg-head b { flex: 1; padding-left: 7px; align-self: center; }
.ok, .no { width: 21.500px; display: flex; align-items: center; justify-content: center; }
.ok svg, .no svg { width: 11px; height: 11px; }
.ok { background: #3f77c8; }
.no { background: #e59a80; }

.f { display: flex; align-items: stretch; height: 20px; margin: 7px 7px 0 6.500px; position: relative; }
.first-f { margin-top: 15px; }
.dlg-a .f label { width: 67.500px; }
.dlg-b .f label { width: 71.500px; }
.f label { display: flex; align-items: center; font-size: 8.500px; flex: none; color: #4a4a4a; }
.val { flex: 1; display: flex; align-items: center; justify-content: space-between; padding: 0 5px 0 11px; font-size: 9.300px; color: #555; position: relative; }
.dlg-b .val { font-size: 10px; }
.num, .dlg-b .num { padding-left: 7px; font-size: 10.500px; }
.line { border-bottom: 1px solid #aaa; }
.hot { background: #f9efe9; padding-left: 8px; overflow: hidden; }
.hot i { font-style: normal; background: #2a5db0; color: #cfe0f7; padding: 0 1px; }
.dlg-b .hot { margin-bottom: -3px; border-bottom-color: #777; }
.ring { position: absolute; left: 34px; top: -5px; width: 33px; height: 33px; border-radius: 50%; background: rgba(255,255,255,.12); border: 1px solid rgba(255,255,255,.35); }
.chev { width: 11px; height: 7px; }
.cur { position: absolute; width: 10px; height: 14px; left: 60px; top: 4px; }
.dlg-b .cur { left: 44px; top: 6px; }
.sw { display: flex; align-items: center; gap: 7px; height: 24px; margin: 0 7px 0 6.500px; font-size: 10.500px; color: #4a4a4a; }
.f + .sw { margin-top: 2px; }
.dlg-b .sw { margin-top: 4px; }
.toggle { width: 27px; height: 13px; border: 1px solid #999; border-radius: 7px; background: #fff; position: relative; }
.toggle::before { content: ""; position: absolute; left: 1px; top: 1px; width: 9px; height: 9px; border-radius: 50%; background: #757575; }

.doc-bar { height: 24px; flex: none; display: flex; align-items: center; padding-left: 68px; background: #dcdcdc; border-top: 1px solid #d2d2d2; font-size: 9.600px; color: #666; position: relative; }
.doc-add { position: absolute; left: 34px; top: 4px; width: 14px; height: 15px; }
.doc { width: 97px; height: 100%; padding-left: 10px; display: flex; align-items: center; }
.doc.active { background: #fff; color: #555; border-radius: 0 0 3px 3px; box-shadow: 0 1px 1px #aaa; width: 91px; margin-top: -1px; height: 22px; align-self: flex-start; }
```
